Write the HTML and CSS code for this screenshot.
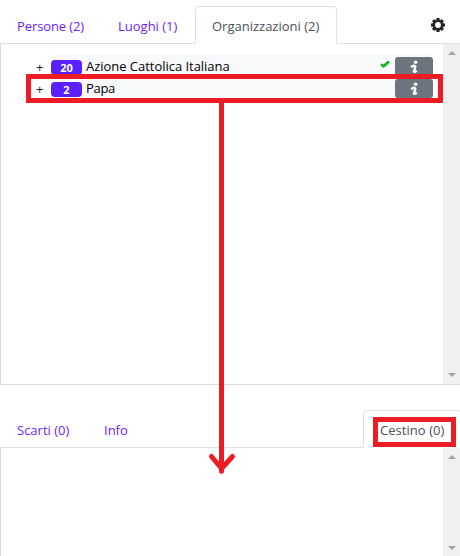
FILE: index.html
```html
<!DOCTYPE html>
<html lang="it">
<head>
<meta charset="utf-8">
<title>Organizzazioni</title>
<link rel="stylesheet" href="styles.css">
</head>
<body>
<div class="app">
  <nav class="tabs tabs-top">
    <a class="tab persone"><span>Persone (2)</span></a>
    <a class="tab luoghi"><span>Luoghi (1)</span></a>
    <a class="tab organizzazioni active"><span>Organizzazioni (2)</span></a>
    <svg class="gear" viewBox="0 0 16 16"><g fill="#212529"><rect x="6.3" y="1" width="3.4" height="14" rx=".8"/><rect x="6.3" y="1" width="3.4" height="14" rx=".8" transform="rotate(45 8 8)"/><rect x="6.3" y="1" width="3.4" height="14" rx=".8" transform="rotate(90 8 8)"/><rect x="6.3" y="1" width="3.4" height="14" rx=".8" transform="rotate(135 8 8)"/><circle cx="8" cy="8" r="5.3"/></g><circle cx="8" cy="8" r="2.9" fill="#fff"/></svg>
  </nav>
  <section class="panel panel-top">
    <div class="list">
      <div class="row first">
        <span class="plus">+</span>
        <div class="item"><span class="badge">20</span><span class="name azione">Azione Cattolica Italiana</span>
          <svg class="check" viewBox="0 0 10 8"><path d="M1 4.2 3.6 6.3 9 1.4" fill="none" stroke="#12b324" stroke-width="2.7"/></svg>
          <span class="info"><svg viewBox="0 0 8 14"><circle cx="5.6" cy="2.3" r="1.8"/><path d="M1.2 7.4Q3.4 5 5 6.1 5.8 6.8 4.6 9.2L3.8 11.3Q4.4 12.6 6.8 10.6" fill="none" stroke="#fff" stroke-width="2.3"/></svg></span>
        </div>
      </div>
      <div class="row">
        <span class="plus">+</span>
        <div class="item"><span class="badge">2</span><span class="name papa">Papa</span>
          <span class="info"><svg viewBox="0 0 8 14"><circle cx="5.6" cy="2.3" r="1.8"/><path d="M1.2 7.4Q3.4 5 5 6.1 5.8 6.8 4.6 9.2L3.8 11.3Q4.4 12.6 6.8 10.6" fill="none" stroke="#fff" stroke-width="2.3"/></svg></span>
        </div>
      </div>
    </div>
    <div class="scrollbar"><i class="up"></i><i class="down"></i></div>
  </section>
  <nav class="tabs tabs-bottom">
    <a class="tab scarti"><span>Scarti (0)</span></a>
    <a class="tab details"><span>Info</span></a>
    <a class="tab cestino active"><span>Cestino (0)</span></a>
  </nav>
  <section class="panel panel-bottom">
    <div class="list"></div>
    <div class="scrollbar"><i class="up"></i><i class="down"></i></div>
  </section>
  <svg class="annotations" viewBox="0 0 460 556" fill="none" stroke="#ed1c24" stroke-width="5"><rect x="28.5" y="76.5" width="412" height="24"/><path d="M221.5 100V469"/><path d="M211.5 456.5 221.5 468.5 232.5 456.5M221.5 466V471.3" stroke-linecap="round" stroke-linejoin="round"/><rect x="375.5" y="419.5" width="78" height="25"/></svg>
</div>
</body>
</html>
```
FILE: styles.css
```css
* { box-sizing: border-box; }
body { margin: 0; background: #fff; font: 13px/20px "Open Sans", "Noto Sans", sans-serif; color: #212529; }
.app { position: relative; display: flex; flex-direction: column; width: 460px; height: 556px; overflow: hidden; }
.tabs { display: flex; border-bottom: 1px solid #dee2e6; }
.tabs-top { height: 44px; padding-top: 6px; }
.tabs-bottom { height: 38px; margin-top: 25px; }
.tab { display: block; height: 38px; border: 1px solid transparent; padding: 9px 0 0 16px; color: #6e1cff; white-space: nowrap; }
.active { background: #fff; color: #495057; border-color: #dee2e6 #dee2e6 #fff; border-radius: 4px 4px 0 0; }
.persone { width: 101px; letter-spacing: -0.1px; }
.luoghi { width: 94px; }
.organizzazioni { width: 142px; }
.scarti { width: 86px; }
.details { padding-left: 17px; }
.cestino { width: 98px; margin: 0 -1px 0 auto; letter-spacing: 0.05px; }
.gear { width: 16px; height: 16px; margin: 11px 14px 0 auto; }
.panel { display: flex; border-left: 1px solid #dcdcdc; }
.panel-top { height: 341px; border-bottom: 1px solid #dcdcdc; }
.panel-bottom { flex: 1; }
.list { flex: 1; padding: 10px 10px 0 35px; }
.row { display: flex; height: 22px; }
.plus { width: 15px; padding-top: 3px; }
.item { display: flex; flex: 1; align-items: flex-start; background: #f8f9fa; border-radius: 4px; }
.badge { width: 31px; height: 15px; margin-top: 6px; border-radius: 4px; background: #5b20ff; color: #fff; font-size: 11px; font-weight: 700; line-height: 15px; text-align: center; }
.name { margin: 2px 0 0 4px; color: #000; white-space: nowrap; letter-spacing: -0.03px; }
.papa { letter-spacing: -0.3px; }
.check { width: 10px; height: 8px; margin: 6px 5px 0 auto; }
.info { display: flex; align-items: center; justify-content: center; width: 38px; height: 19px; margin-top: 3px; border-radius: 3px; background: #6c757d; }
.papa + .info { margin-left: auto; }
.info svg { width: 8px; height: 14px; fill: #fff; }
.scrollbar { display: flex; flex-direction: column; justify-content: space-between; align-items: center; width: 17px; padding: 7px 0; background: #f0f0f0; }
.panel-bottom .scrollbar { padding-bottom: 6px; }
.up, .down { border: solid transparent; border-width: 0 4px; }
.up { border-bottom: 4px solid #a3a3a3; }
.down { border-top: 4px solid #a3a3a3; }
.annotations { position: absolute; inset: 0; width: 460px; height: 556px; pointer-events: none; }
```
